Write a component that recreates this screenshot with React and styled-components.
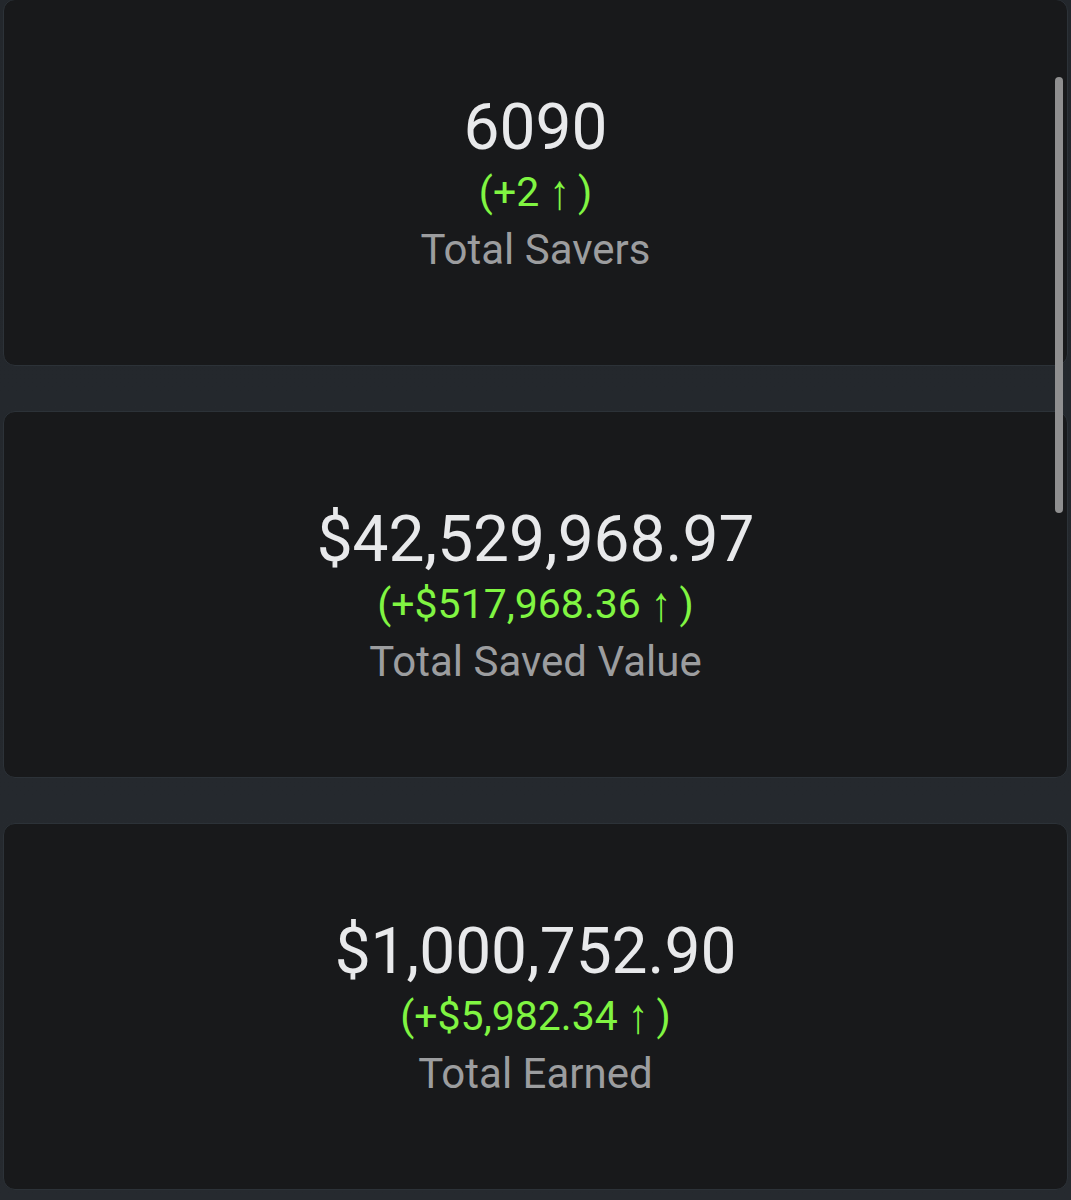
import React from "react";
import styled, { createGlobalStyle } from "styled-components";

const GlobalStyle = createGlobalStyle`
  html, body {
    margin: 0;
    padding: 0;
    background: #25292e;
  }
  body {
    font-family: Roboto, "Noto Sans", "Liberation Sans", sans-serif;
  }
`;

const stats = [
  { value: "6090", delta: "+2", label: "Total Savers" },
  { value: "$42,529,968.97", delta: "+$517,968.36", label: "Total Saved Value" },
  { value: "$1,000,752.90", delta: "+$5,982.34", label: "Total Earned" },
];

const App = () => {
  return (
    <>
      <GlobalStyle />
      <Page>
        <CardList>
          {stats.map((s) => (
            <Card key={s.label}>
              <Value>{s.value}</Value>
              <Delta>
                ({s.delta} <Arrow>↑</Arrow>)
              </Delta>
              <Label>{s.label}</Label>
            </Card>
          ))}
        </CardList>
        <ScrollThumb />
      </Page>
    </>
  );
};

const Page = styled.div`
  position: relative;
  width: 1071px;
  height: 1200px;
  overflow: hidden;
  background: linear-gradient(180deg, #23272c 0%, #262a2f 100%);
`;

const CardList = styled.div`
  display: flex;
  flex-direction: column;
  gap: 45px;
  margin-top: -1px;
  padding: 0 3px;
`;

const Card = styled.div`
  height: 367px;
  box-sizing: border-box;
  background: #18191b;
  border: 1px solid #2c3238;
  border-radius: 12px;
  display: flex;
  flex-direction: column;
  align-items: center;
  justify-content: center;
  padding-top: 6px;
`;

const Value = styled.div`
  color: #e8e9eb;
  font-size: 64px;
  line-height: 70px;
  font-weight: 400;
`;

const Delta = styled.div`
  color: #80f542;
  font-size: 41px;
  line-height: 58px;
`;

const Arrow = styled.span`
  display: inline-block;
  margin-right: 8px;
  transform: scaleY(1.2);
`;

const Label = styled.div`
  color: #9c9d9f;
  font-size: 42px;
  line-height: 58px;
`;

const ScrollThumb = styled.div`
  position: absolute;
  top: 77px;
  left: 1055px;
  width: 8px;
  height: 436px;
  border-radius: 4px;
  background: #8f8f90;
`;

export default App;
